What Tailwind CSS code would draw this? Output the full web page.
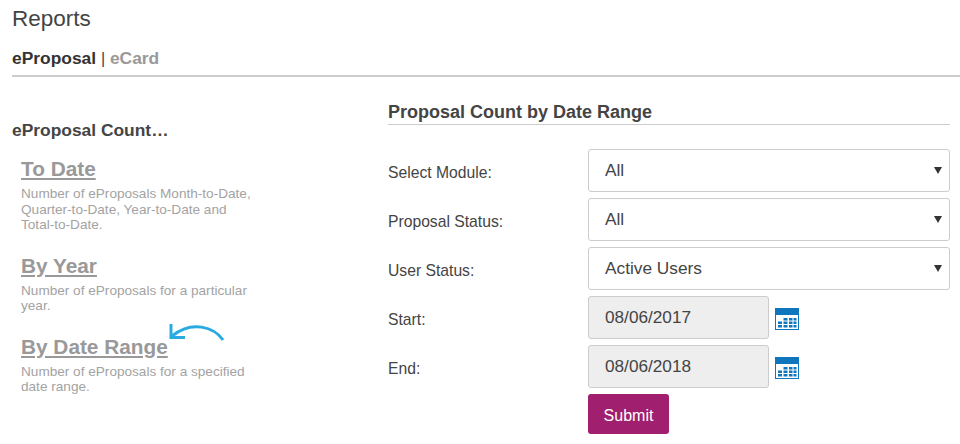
<!DOCTYPE html>
<html lang="en">
<head>
<meta charset="utf-8">
<title>Reports</title>
<script src="https://cdn.jsdelivr.net/npm/@tailwindcss/browser@4"></script>
</head>
<body class="bg-white overflow-hidden font-['Liberation_Sans',Arial,sans-serif] text-[#333]">
<div class="w-[960px] h-[444px] overflow-hidden">
  <header class="pl-3 pt-[6px]">
    <h1 class="text-[22.5px] leading-[26px] text-[#444]">Reports</h1>
    <div class="mt-[14px] h-[31px] border-b-2 border-[#ccc] text-[17.4px] leading-[24px]"><b class="text-[#333]">eProposal</b> <span class="text-[#444] text-[16px]">|</span> <b class="text-[#999]">eCard</b></div>
  </header>
  <main class="flex">
    <aside class="w-[388px] pl-3 pt-[43px]">
      <h2 class="text-[17.4px] leading-[20px] font-bold text-[#444]">eProposal Count…</h2>
      <div class="pl-[9px] mt-[17px] flex flex-col gap-[21px]">
        <section>
          <a class="block text-[20.8px] leading-[24px] font-bold text-[#999] underline">To Date</a>
          <p class="mt-[5px] w-[236px] text-[13.6px] leading-[15.5px] text-[#a3a3a3]">Number of eProposals Month-to-Date, Quarter-to-Date, Year-to-Date and Total-to-Date.</p>
        </section>
        <section>
          <a class="block text-[20.8px] leading-[24px] font-bold text-[#999] underline">By Year</a>
          <p class="mt-[5px] w-[236px] text-[13.6px] leading-[15.5px] text-[#a3a3a3]">Number of eProposals for a particular year.</p>
        </section>
        <section class="relative">
          <a class="block text-[20.8px] leading-[24px] font-bold text-[#999] underline">By Date Range</a>
          <svg class="absolute left-[147px] top-[-13px]" width="58" height="24" viewBox="0 0 58 24" fill="none" stroke="#29abe2" stroke-width="3"><path d="M55 18C46 5 24 -2 4 14"/><path d="M3 2L3 15.500L17 15.500"/></svg>
          <p class="mt-[5px] w-[236px] text-[13.6px] leading-[15.5px] text-[#a3a3a3]">Number of eProposals for a specified date range.</p>
        </section>
      </div>
    </aside>
    <section class="w-[562px] pt-[25px]">
      <h2 class="h-[23px] border-b border-[#ccc] text-[18px] leading-[20px] font-bold text-[#444]">Proposal Count by Date Range</h2>
      <form class="mt-[24px] flex flex-col gap-[6px]">
        <div class="flex items-center">
          <label class="w-[200px] pt-[4px] text-[15.7px] text-[#444]">Select Module:</label>
          <div class="relative w-[362px]">
            <select class="w-full h-[43px] appearance-none rounded-[3px] border border-[#ccc] bg-white pl-[16px] text-[17.3px] text-[#444]"><option>All</option></select>
            <svg class="absolute right-[8px] top-[18px]" width="8" height="7" viewBox="0 0 8 7"><path d="M0 0H8L4 7Z" fill="#333"/></svg>
          </div>
        </div>
        <div class="flex items-center">
          <label class="w-[200px] pt-[4px] text-[15.7px] text-[#444]">Proposal Status:</label>
          <div class="relative w-[362px]">
            <select class="w-full h-[43px] appearance-none rounded-[3px] border border-[#ccc] bg-white pl-[16px] text-[17.3px] text-[#444]"><option>All</option></select>
            <svg class="absolute right-[8px] top-[18px]" width="8" height="7" viewBox="0 0 8 7"><path d="M0 0H8L4 7Z" fill="#333"/></svg>
          </div>
        </div>
        <div class="flex items-center">
          <label class="w-[200px] pt-[4px] text-[15.7px] text-[#444]">User Status:</label>
          <div class="relative w-[362px]">
            <select class="w-full h-[43px] appearance-none rounded-[3px] border border-[#ccc] bg-white pl-[16px] text-[17.3px] text-[#444]"><option>Active Users</option></select>
            <svg class="absolute right-[8px] top-[18px]" width="8" height="7" viewBox="0 0 8 7"><path d="M0 0H8L4 7Z" fill="#333"/></svg>
          </div>
        </div>
        <div class="flex items-center">
          <label class="w-[200px] pt-[4px] text-[15.7px] text-[#444]">Start:</label>
          <input class="w-[181px] h-[43px] rounded-[3px] border border-[#ccc] bg-[#eee] pl-[16px] text-[17.2px] text-[#444]" value="08/06/2017" disabled>
          <svg class="ml-[6px] mt-[3px]" width="24" height="22" viewBox="0 0 24 22"><rect width="24" height="22" fill="#0f75bc"/><rect x="1" y="7" width="22" height="14" fill="#fff"/><path d="M3 13.500h4v2.500H3zM3 17h4v2.500H3zM8.500 10h4v2.500h-4zM8.500 13.500h4v2.500h-4zM8.500 17h4v2.500h-4zM14 10h3.500v2.500H14zM14 13.500h3.500v2.500H14zM14 17h3.500v2.500H14zM18.500 10H21.500v2.500h-3zM18.500 13.500H21.500v2.500h-3zM18.500 17H21.500v2.500h-3z" fill="#0f75bc"/></svg>
        </div>
        <div class="flex items-center">
          <label class="w-[200px] pt-[4px] text-[15.7px] text-[#444]">End:</label>
          <input class="w-[181px] h-[43px] rounded-[3px] border border-[#ccc] bg-[#eee] pl-[16px] text-[17.2px] text-[#444]" value="08/06/2018" disabled>
          <svg class="ml-[6px] mt-[3px]" width="24" height="22" viewBox="0 0 24 22"><rect width="24" height="22" fill="#0f75bc"/><rect x="1" y="7" width="22" height="14" fill="#fff"/><path d="M3 13.500h4v2.500H3zM3 17h4v2.500H3zM8.500 10h4v2.500h-4zM8.500 13.500h4v2.500h-4zM8.500 17h4v2.500h-4zM14 10h3.500v2.500H14zM14 13.500h3.500v2.500H14zM14 17h3.500v2.500H14zM18.500 10H21.500v2.500h-3zM18.500 13.500H21.500v2.500h-3zM18.500 17H21.500v2.500h-3z" fill="#0f75bc"/></svg>
        </div>
        <div class="pl-[200px]">
          <button type="button" class="w-[81px] h-[40px] pt-1 rounded-[3px] bg-[#a01f6e] text-white text-[16px]">Submit</button>
        </div>
      </form>
    </section>
  </main>
</div>
</body>
</html>
